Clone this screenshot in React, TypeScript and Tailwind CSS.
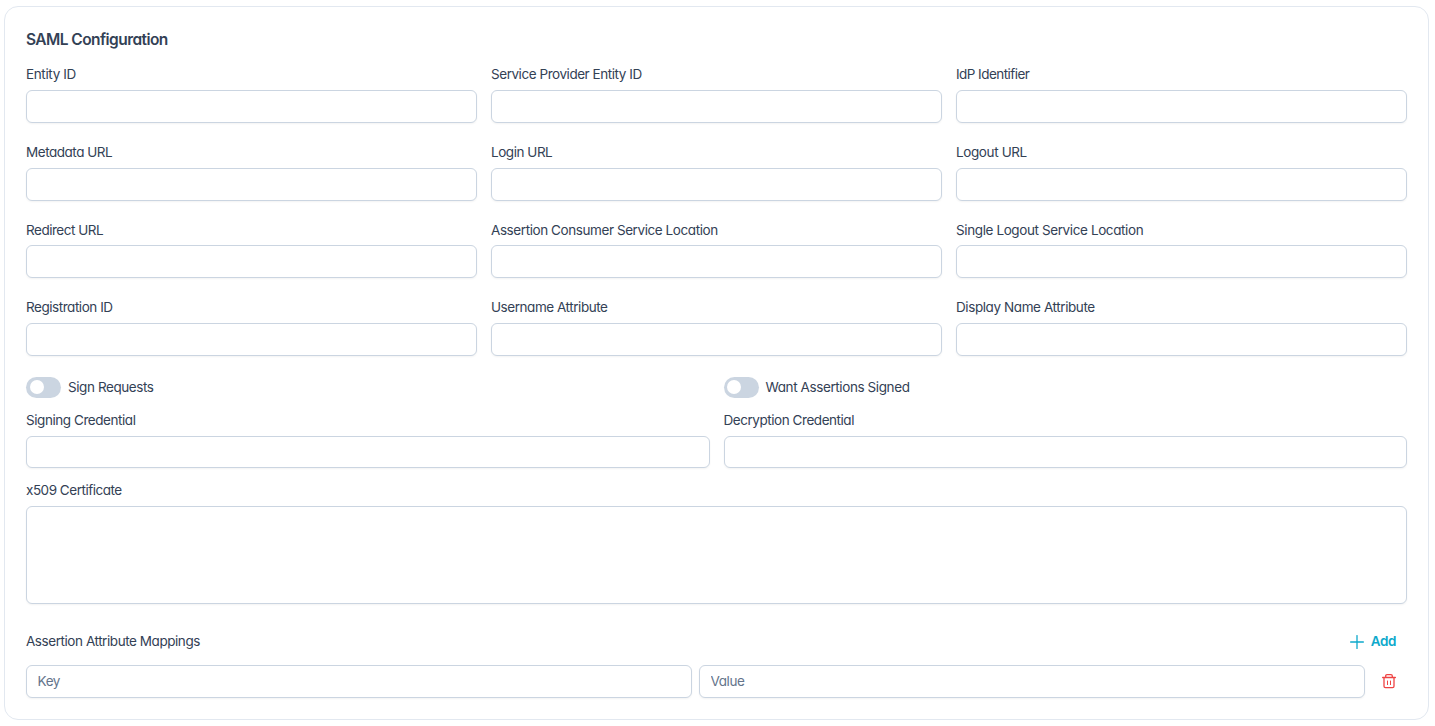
import { useState } from 'react';

interface Field {
  label: string;
  tracking: string;
}

const samlFields: Field[] = [
  { label: 'Entity ID', tracking: 'tracking-[-0.36px]' },
  { label: 'Service Provider Entity ID', tracking: 'tracking-[-0.45px]' },
  { label: 'IdP Identifier', tracking: 'tracking-[-0.55px]' },
  { label: 'Metadata URL', tracking: 'tracking-[-0.47px]' },
  { label: 'Login URL', tracking: 'tracking-[-0.46px]' },
  { label: 'Logout URL', tracking: 'tracking-[-0.38px]' },
  { label: 'Redirect URL', tracking: 'tracking-[-0.48px]' },
  { label: 'Assertion Consumer Service Location', tracking: 'tracking-[-0.42px]' },
  { label: 'Single Logout Service Location', tracking: 'tracking-[-0.39px]' },
  { label: 'Registration ID', tracking: 'tracking-[-0.46px]' },
  { label: 'Username Attribute', tracking: 'tracking-[-0.45px]' },
  { label: 'Display Name Attribute', tracking: 'tracking-[-0.41px]' },
];

const credentialFields: Field[] = [
  { label: 'Signing Credential', tracking: 'tracking-[-0.44px]' },
  { label: 'Decryption Credential', tracking: 'tracking-[-0.45px]' },
];

const inputClass =
  'block w-full rounded-[6px] border border-[#cbd5e1] bg-white px-[10.5px] text-[13.5px] text-[#334155] shadow-[0_1px_2px_0_rgba(18,18,23,0.05)] outline-none placeholder:text-[#64748b] focus:border-[#06b6d4]';

function TextField({ label, tracking, height = 'h-[32.75px]' }: Field & { height?: string }) {
  return (
    <label className="block">
      <span className={`block w-fit pt-[0.35px] whitespace-nowrap leading-[20px] ${tracking}`}>{label}</span>
      <input type="text" className={`mt-[5.9px] ${height} ${inputClass}`} />
    </label>
  );
}

function Toggle({ label, tracking }: Field) {
  const [on, setOn] = useState(false);

  return (
    <div className="flex items-center gap-[7px]">
      <button
        type="button"
        role="switch"
        aria-checked={on}
        aria-label={label}
        onClick={() => setOn(!on)}
        className={`flex h-[21px] w-[35px] items-center rounded-full px-[3.5px] ${on ? 'justify-end bg-[#06b6d4]' : 'bg-[#cbd5e1]'}`}
      >
        <span className="size-[14px] rounded-full bg-white" />
      </button>
      <span className={`pb-px whitespace-nowrap leading-[20px] ${tracking}`}>{label}</span>
    </div>
  );
}

function PlusIcon() {
  return (
    <svg width="14" height="14" viewBox="0 0 14 14" fill="none" stroke="currentColor" strokeWidth="1.3" strokeLinecap="round">
      <path d="M7 .6v12.8M.6 7h12.8" />
    </svg>
  );
}

function TrashIcon() {
  return (
    <svg width="14" height="15" viewBox="0 0 14 15" fill="none" stroke="currentColor" strokeWidth="1.3" strokeLinecap="round" strokeLinejoin="round">
      <path d="M.6 3.5h12.8" />
      <path d="M3.7 3.4V2c0-.8.5-1.3 1.3-1.3h4c.8 0 1.3.5 1.3 1.3v1.4" />
      <path d="M2 3.7v8.6c0 .9.6 1.4 1.5 1.4h7c.9 0 1.5-.5 1.5-1.4V3.7" />
      <path d="M5.5 7v3.6M8.5 7v3.6" strokeWidth="1" />
    </svg>
  );
}

export default function App() {
  return (
    <div className="h-[726px] bg-white pt-[6px] pl-[4px] font-['Inter','Liberation_Sans',sans-serif] text-[13.5px] text-[#334155] [font-feature-settings:'cv11']">
      <section className="h-[714px] w-[1425px] rounded-[14px] border border-[#e2e8f0] px-[21px] pt-[21px]">
        <h2 className="w-fit text-[15.5px] leading-[24px] font-semibold tracking-[-0.56px]">SAML Configuration</h2>

        <div className="mt-[12px] grid grid-cols-3 gap-x-[14px] gap-y-[18.6px]">
          {samlFields.map((field) => (
            <TextField key={field.label} {...field} />
          ))}
        </div>

        <div className="mt-[20.85px] grid grid-cols-2 gap-x-[14px]">
          <Toggle label="Sign Requests" tracking="tracking-[-0.42px]" />
          <Toggle label="Want Assertions Signed" tracking="tracking-[-0.4px]" />
        </div>

        <div className="mt-[12px] grid grid-cols-2 gap-x-[14px]">
          {credentialFields.map((field) => (
            <TextField key={field.label} {...field} height="h-[32.5px]" />
          ))}
        </div>

        <label className="mt-[11.6px] block">
          <span className="block w-fit leading-[20px] tracking-[-0.48px]">x509 Certificate</span>
          <textarea className={`mt-[6.25px] h-[98px] resize-none ${inputClass}`} />
        </label>

        <div className="mt-[21px] flex h-[33px] items-center justify-between">
          <span className="pb-px tracking-[-0.44px]">Assertion Attribute Mappings</span>
          <button type="button" className="flex items-center gap-[7px] pr-[11px] font-semibold text-[#0ea9cb]">
            <PlusIcon />
            <span className="pb-px tracking-[-0.4px]">Add</span>
          </button>
        </div>

        <div className="mt-[7px] flex gap-[7px]">
          <input type="text" placeholder="Key" className={`h-[33px] flex-1 pb-[2px] tracking-[-0.4px] ${inputClass}`} />
          <input type="text" placeholder="Value" className={`h-[33px] flex-1 pb-[2px] tracking-[-0.4px] ${inputClass}`} />
          <button type="button" aria-label="Delete mapping" className="flex h-[33px] w-[35px] items-center justify-center pr-[1.2px] text-[#ef4444]">
            <TrashIcon />
          </button>
        </div>
      </section>
    </div>
  );
}
